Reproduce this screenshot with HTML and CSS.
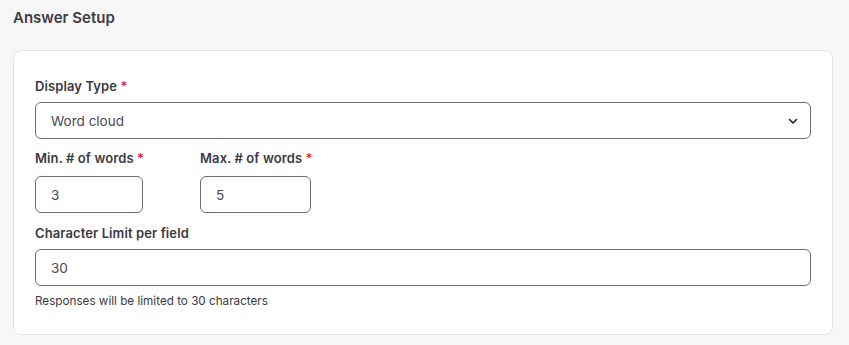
FILE: index.html
```html
<!doctype html>
<html lang="en">
<head>
    <meta charset="UTF-8">
    <title>Answer Setup</title>
    <link rel="stylesheet" href="styles.css">
</head>
<body>
    <div class="page">
        <h2 class="title">Answer Setup</h2>
        <div class="card">
            <div class="field">
                <label class="label">Display Type <span class="req">*</span></label>
                <div class="select">
                    <span>Word cloud</span>
                    <svg width="12" height="12" viewBox="0 0 12 12"><path d="M2.5 4.5 6 8l3.5-3.5" fill="none" stroke="#222" stroke-width="1.6" stroke-linecap="round" stroke-linejoin="round"/></svg>
                </div>
            </div>
            <div class="row">
                <div class="field small">
                    <label class="label">Min. # of words <span class="req">*</span></label>
                    <div class="input w-min">3</div>
                </div>
                <div class="field small">
                    <label class="label">Max. # of words <span class="req">*</span></label>
                    <div class="input w-max">5</div>
                </div>
            </div>
            <div class="field">
                <label class="label">Character Limit per field</label>
                <div class="input">30</div>
                <p class="hint">Responses will be limited to 30 characters</p>
            </div>
        </div>
    </div>
</body>
</html>
```

FILE: styles.css
```css
*{
    padding: 0;
    margin: 0;
    box-sizing: border-box;
}
html,body{
    height: 100%;
}
body{
    background: #f7f7f7;
    font-family: Inter, "Liberation Sans", sans-serif;
    color: #3b3942;
}
.page{
    padding: 9px 16px 0 13px;
}
.title{
    font-size: 15px;
    font-weight: 600;
    line-height: 18px;
    color: #3d3b44;
}
.card{
    margin-top: 23px;
    background: #fff;
    border: 1px solid #e4e4e6;
    border-radius: 8px;
    padding: 27px 21px 26px 21px;
}
.label{
    display: block;
    font-size: 13px;
    font-weight: 600;
    letter-spacing: 0.1px;
    line-height: 16px;
    color: #3b3942;
    margin-bottom: 8px;
    white-space: nowrap;
}
.row .label{
    margin-bottom: 10px;
}
.req{
    color: #e0262b;
}
.select,.input{
    height: 37px;
    border: 1px solid #6f6c7a;
    border-radius: 6px;
    background: #fff;
    font-size: 13.5px;
    color: #4a4753;
    display: flex;
    align-items: center;
    padding: 0 15px;
}
.select{
    justify-content: space-between;
    padding-right: 11px;
}
.row{
    display: flex;
    gap: 57px;
    margin-top: 11px;
}
.row .field{
    width: 108px;
}
.row .field + .field{
    width: 111px;
}
.row + .field{
    margin-top: 12px;
}
.hint{
    font-size: 11.7px;
    line-height: 14px;
    margin-top: 8px;
    color: #3b3942;
}
```
